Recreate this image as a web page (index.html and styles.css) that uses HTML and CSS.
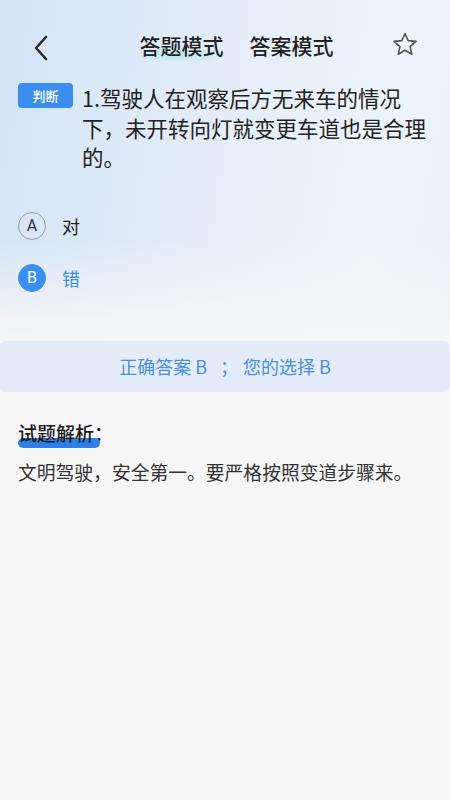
FILE: index.html
```html
<!DOCTYPE html>
<html lang="zh-CN">
<head>
<meta charset="utf-8">
<link rel="stylesheet" href="styles.css">
</head>
<body>
<div class="page">
  <div class="nav">
    <div class="back">
      <svg width="16" height="26" viewBox="0 0 16 26"><path d="M13 2 L3 13 L13 24" fill="none" stroke="#2b2b2b" stroke-width="2.6" stroke-linecap="round" stroke-linejoin="round"/></svg>
    </div>
    <div class="tabs">
      <span class="tab active">答题模式</span>
      <span class="tab">答案模式</span>
    </div>
    <div class="star">
      <svg width="28" height="28" viewBox="0 0 28 28"><path d="M14 2.5 L17.2 9.6 L25 10.4 L19.1 15.6 L20.8 23.3 L14 19.3 L7.2 23.3 L8.9 15.6 L3 10.4 L10.8 9.6 Z" fill="none" stroke="#555" stroke-width="1.6" stroke-linejoin="round"/></svg>
    </div>
  </div>

  <div class="question">
    <span class="tag">判断</span>
    <p class="qtext">1.驾驶人在观察后方无来车的情况下，未开转向灯就变更车道也是合理的。</p>
  </div>

  <div class="options">
    <div class="option">
      <span class="circle">A</span>
      <span class="otext">对</span>
    </div>
    <div class="option selected">
      <span class="circle">B</span>
      <span class="otext">错</span>
    </div>
  </div>

  <div class="answer">正确答案 B<span class="sep">；</span>您的选择 B</div>

  <div class="analysis">
    <div class="atitle"><span class="mark">试题解析</span>：</div>
    <p class="atext">文明驾驶，安全第一。要严格按照变道步骤来。</p>
  </div>
</div>
</body>
</html>
```

FILE: styles.css
```css
* { box-sizing: border-box; }
html, body { margin: 0; padding: 0; }
body {
  font-family: "Noto Sans CJK SC", "Noto Sans", sans-serif;
  background: #f6f6f7;
  color: #222;
}
.page {
  width: 450px;
  min-height: 800px;
  background:
    linear-gradient(180deg, rgba(246,246,247,0) 0%, rgba(246,246,247,0) 30%, #f6f6f7 43%),
    linear-gradient(100deg, #d3e4f7 0%, #e4edf9 40%, #edf3fa 70%, #e3edf9 100%);
  overflow: hidden;
}
.nav {
  height: 65px;
  padding-top: 25px;
  display: flex;
  align-items: center;
}
.back {
  width: 60px;
  padding-left: 33px;
  display: flex;
  align-items: center;
  height: 40px;
  margin-top: 6px;
}
.tabs {
  flex: 1;
  display: flex;
  justify-content: center;
  gap: 26px;
  padding-left: 23px;
  margin-top: -1px;
}
.tab {
  font-size: 21px;
  font-weight: 500;
  color: #222;
  line-height: 30px;
  position: relative;
  z-index: 0;
}
.tab.active::after {
  content: "";
  position: absolute;
  left: 2px;
  right: 2px;
  bottom: 0;
  height: 9px;
  border-radius: 5px;
  background: linear-gradient(90deg, rgba(170,235,240,0.15), rgba(150,232,235,0.5) 35%, rgba(170,228,245,0.15));
  z-index: -1;
  filter: blur(1.5px);
}
.star {
  width: 60px;
  display: flex;
  align-items: center;
  justify-content: flex-start;
  padding-left: 1px;
  height: 40px;
  margin-top: -1px;
}
.question {
  margin-top: 18px;
  display: flex;
  align-items: flex-start;
  padding: 0 18px;
  gap: 9px;
}
.tag {
  flex: none;
  width: 55px;
  height: 25px;
  border-radius: 4px;
  background: #3b8ef0;
  color: #fff;
  font-size: 13px;
  font-weight: 500;
  line-height: 25px;
  text-align: center;
}
.qtext {
  margin: 0;
  font-size: 21.5px;
  line-height: 29.5px;
  color: #222;
  flex: 1;
}
.options {
  margin-top: 28px;
  padding: 0 18px;
}
.option {
  height: 52px;
  display: flex;
  align-items: center;
  gap: 16px;
}
.circle {
  width: 28px;
  height: 28px;
  border-radius: 50%;
  border: 1.2px solid #9a9a9a;
  display: flex;
  align-items: center;
  justify-content: center;
  font-family: "Roboto", "Noto Sans", sans-serif;
  font-size: 16px;
  color: #333;
}
.otext {
  font-size: 18px;
  color: #222;
}
.option.selected .circle {
  background: #3b8ef0;
  border-color: #3b8ef0;
  color: #fff;
}
.option.selected .otext {
  color: #3a8ee6;
}
.answer {
  margin-top: 37px;
  height: 51px;
  background: #e3ecf8;
  border-radius: 6px;
  display: flex;
  align-items: center;
  justify-content: center;
  font-size: 18px;
  color: #4a90d9;
  white-space: pre;
}
.sep {
  padding: 0 5px 0 13px;
}
.analysis {
  padding: 0 18px;
  margin-top: 29px;
}
.atitle {
  font-size: 19px;
  font-weight: 500;
  line-height: 24px;
  color: #1a1a1a;
}
.mark {
  position: relative;
  z-index: 0;
  display: inline-block;
}
.mark::after {
  content: "";
  position: absolute;
  left: 0;
  width: 82px;
  bottom: -3px;
  height: 10px;
  border-radius: 5px;
  background: #2f7fe8;
  z-index: -1;
}
.atext {
  margin: 13px 0 0;
  font-size: 18.8px;
  line-height: 28px;
  color: #333;
}
```
